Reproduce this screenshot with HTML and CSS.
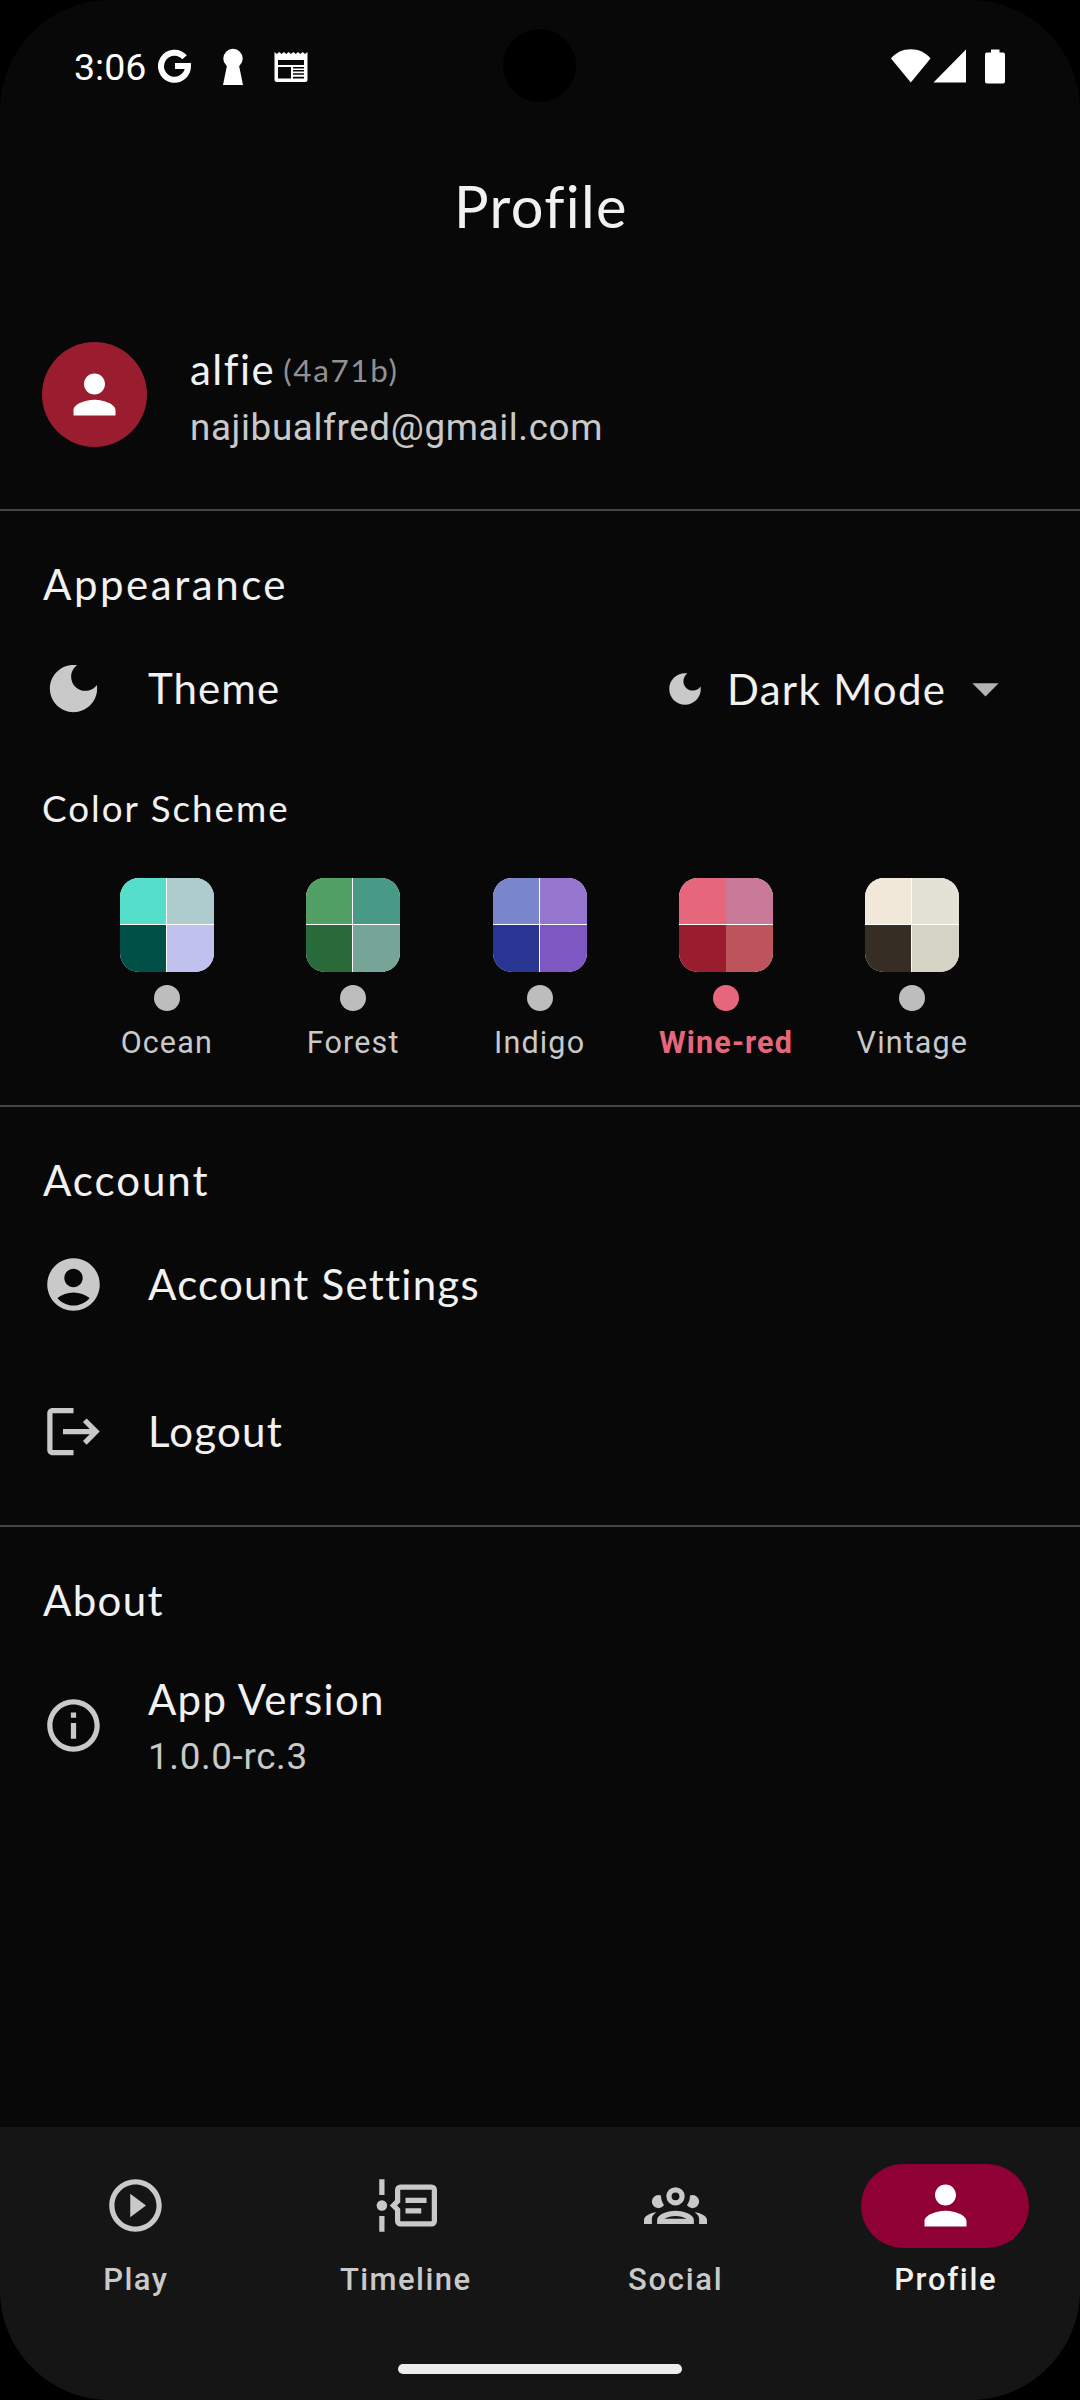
FILE: index.html
```html
<!DOCTYPE html>
<html lang="en">
<head>
<meta charset="utf-8">
<title>Profile</title>
<link rel="stylesheet" href="styles.css">
</head>
<body>
<div class="screen">
  <div class="camera"></div>
  <header class="status">
    <div class="status-left">
      <span class="clock">3:06</span>
      <svg class="ic-google" width="34" height="34" viewBox="0 0 34 34"><path d="M26.6 8.3A13.5 13.5 0 1 0 30 17H17" fill="none" stroke="#fff" stroke-width="6"/></svg>
      <svg class="ic-key" width="22" height="38" viewBox="0 0 22 38" fill="#fff"><circle cx="11" cy="10.5" r="9.7"/><path d="M5.5 15h11l4.5 22H1z"/></svg>
      <svg class="ic-news" width="34" height="32" viewBox="0 0 34 32"><path fill="#fff" fill-rule="evenodd" d="M.5 1l2.3 2 2.4-2 2.3 2 2.4-2 2.3 2 2.4-2L17 3l2.4-2 2.3 2L24 1l2.3 2 2.4-2L31 3l2.5-2v27.500a2.500 2.500 0 0 1-2.500 2.500H3a2.500 2.500 0 0 1-2.500-2.500zM4 9v5h26V9zM4 16v11.500h13V16zM19 16v1.500h11V16zM19 19v1.500h11V19zM19 22.300v1.500h11v-1.500zM19 25.700v1.800h11v-1.800z"/></svg>
    </div>
    <div class="status-right">
      <svg class="ic-wifi" width="40" height="34" viewBox="0 0 40 34" fill="#fff"><path d="M0 9.500C5 3.500 12 .3 19.800.3S34.500 3.500 39.500 9.500L19.800 33.500z"/></svg>
      <svg class="ic-signal" width="34" height="34" viewBox="0 0 34 34" fill="#fff"><path d="M33 .5V33.500H.5z"/></svg>
      <svg class="ic-battery" width="20" height="35" viewBox="0 0 20 35" fill="#fff"><path d="M6 .5h8.500V3.500H18a2 2 0 0 1 2 2V32.500a2 2 0 0 1-2 2H2a2 2 0 0 1-2-2V5.500a2 2 0 0 1 2-2h4z"/></svg>
    </div>
  </header>
  <h1 class="app-title">Profile</h1>

  <main class="content">
    <section class="user">
      <div class="avatar">
        <svg class="icon" viewBox="0 0 24 24"><path d="M12 12c2.210 0 4-1.790 4-4s-1.790-4-4-4-4 1.790-4 4 1.790 4 4 4zm0 2c-2.670 0-8 1.340-8 4v2h16v-2c0-2.660-5.330-4-8-4z"/></svg>
      </div>
      <div class="user-text">
        <div class="user-name"><span>alfie</span><span class="tag">(4a71b)</span></div>
        <div class="sub email">najibualfred@gmail.com</div>
      </div>
    </section>

    <section class="group appearance">
      <h2 class="heading wide">Appearance</h2>
      <div class="row">
        <svg class="icon" viewBox="0 0 24 24"><path d="M12 3c-4.970 0-9 4.030-9 9s4.030 9 9 9 9-4.030 9-9c0-.46-.04-.92-.1-1.360-.98 1.370-2.580 2.260-4.400 2.260-2.980 0-5.400-2.420-5.400-5.400 0-1.810.89-3.420 2.260-4.400-.44-.06-.9-.1-1.360-.1z"/></svg>
        <span class="label theme">Theme</span>
        <div class="select">
          <svg class="icon small" viewBox="0 0 24 24"><path d="M12 3c-4.970 0-9 4.030-9 9s4.030 9 9 9 9-4.030 9-9c0-.46-.04-.92-.1-1.360-.98 1.370-2.580 2.260-4.400 2.260-2.980 0-5.400-2.420-5.400-5.400 0-1.810.89-3.420 2.260-4.400-.44-.06-.9-.1-1.360-.1z"/></svg>
          <span class="select-value">Dark Mode</span>
          <svg class="icon caret" viewBox="0 0 24 24"><path d="M7 10l5 5 5-5z"/></svg>
        </div>
      </div>
      <h3 class="subheading">Color Scheme</h3>
      <div class="schemes">
        <div class="scheme"><div class="swatch ocean"><i></i><i></i><i></i><i></i></div><span class="dot"></span><span class="scheme-name">Ocean</span></div>
        <div class="scheme"><div class="swatch forest"><i></i><i></i><i></i><i></i></div><span class="dot"></span><span class="scheme-name">Forest</span></div>
        <div class="scheme"><div class="swatch indigo"><i></i><i></i><i></i><i></i></div><span class="dot"></span><span class="scheme-name">Indigo</span></div>
        <div class="scheme selected"><div class="swatch wine"><i></i><i></i><i></i><i></i></div><span class="dot"></span><span class="scheme-name">Wine-red</span></div>
        <div class="scheme"><div class="swatch vintage"><i></i><i></i><i></i><i></i></div><span class="dot"></span><span class="scheme-name">Vintage</span></div>
      </div>
    </section>

    <section class="group account">
      <h2 class="heading medium">Account</h2>
      <div class="row">
        <svg class="icon" viewBox="0 0 24 24"><path d="M12 2C6.480 2 2 6.480 2 12s4.480 10 10 10 10-4.480 10-10S17.520 2 12 2zm0 4c1.930 0 3.500 1.570 3.500 3.500S13.930 13 12 13s-3.500-1.570-3.500-3.500S10.070 6 12 6zm0 14c-2.030 0-4.430-.82-6.140-2.880C7.550 15.800 9.680 15 12 15s4.450.8 6.140 2.120C16.430 19.180 14.030 20 12 20z"/></svg>
        <span class="label">Account Settings</span>
      </div>
      <div class="row">
        <svg class="icon" viewBox="0 0 24 24"><path d="M17 7l-1.410 1.410L18.170 11H8v2h10.170l-2.580 2.580L17 17l5-5zM4 5h8V3H4c-1.100 0-2 .9-2 2v14c0 1.100.9 2 2 2h8v-2H4V5z"/></svg>
        <span class="label">Logout</span>
      </div>
    </section>

    <section class="group about">
      <h2 class="heading">About</h2>
      <div class="row tall">
        <svg class="icon" viewBox="0 0 24 24"><path d="M11 7h2v2h-2zm0 4h2v6h-2zm1-9C6.480 2 2 6.480 2 12s4.480 10 10 10 10-4.480 10-10S17.520 2 12 2zm0 18c-4.410 0-8-3.590-8-8s3.590-8 8-8 8 3.590 8 8-3.590 8-8 8z"/></svg>
        <div class="stack"><span class="label">App Version</span><span class="sub">1.0.0-rc.3</span></div>
      </div>
    </section>
  </main>

  <footer class="bottom">
    <nav class="tabs">
      <div class="tab"><div class="pill"><svg class="icon" viewBox="0 0 24 24"><path d="M12 2C6.480 2 2 6.480 2 12s4.480 10 10 10 10-4.480 10-10S17.520 2 12 2zm0 18c-4.410 0-8-3.590-8-8s3.590-8 8-8 8 3.590 8 8-3.590 8-8 8zM10 16.500l6-4.500-6-4.500z"/></svg></div><span>Play</span></div>
      <div class="tab"><div class="pill"><svg class="icon" viewBox="0 0 24 24"><path d="M2 2h2v6H2zM2 16h2v6H2zM12 9h8v2h-8zM12 13h6v2h-6z"/><circle cx="3" cy="12" r="2"/><path fill-rule="evenodd" d="M10 4h12a2 2 0 0 1 2 2v12a2 2 0 0 1-2 2H10a2 2 0 0 1-2-2v-4l-2-2 2-2V6a2 2 0 0 1 2-2zM10 6v4.800L8.800 12l1.200 1.200V18h12V6z"/></svg></div><span>Timeline</span></div>
      <div class="tab social"><div class="pill"><svg class="icon" viewBox="0 0 24 24"><path d="M12,5A3.500,3.500 0 0,0 8.500,8.500A3.500,3.500 0 0,0 12,12A3.500,3.500 0 0,0 15.500,8.500A3.500,3.500 0 0,0 12,5M12,7A1.500,1.500 0 0,1 13.500,8.500A1.500,1.500 0 0,1 12,10A1.500,1.500 0 0,1 10.500,8.500A1.500,1.500 0 0,1 12,7M5.500,8A2.500,2.500 0 0,0 3,10.500C3,11.440 3.530,12.250 4.290,12.680C4.650,12.880 5.060,13 5.500,13C5.940,13 6.350,12.880 6.710,12.680C7.080,12.470 7.390,12.170 7.620,11.810C6.890,10.860 6.500,9.700 6.500,8.500C6.500,8.410 6.500,8.310 6.500,8.220C6.200,8.080 5.860,8 5.500,8M18.500,8C18.140,8 17.800,8.080 17.500,8.220C17.500,8.310 17.500,8.410 17.500,8.500C17.500,9.700 17.110,10.860 16.380,11.810C16.500,12 16.630,12.150 16.780,12.300C16.940,12.450 17.100,12.580 17.290,12.680C17.650,12.880 18.060,13 18.500,13C18.940,13 19.350,12.880 19.710,12.680C20.470,12.250 21,11.440 21,10.500A2.500,2.500 0 0,0 18.500,8M12,14C9.660,14 5,15.170 5,17.500V19H19V17.500C19,15.170 14.340,14 12,14M4.710,14.550C2.780,14.780 0,15.760 0,17.500V19H3V17.070C3,16.060 3.690,15.220 4.710,14.550M19.290,14.550C20.310,15.220 21,16.060 21,17.070V19H24V17.500C24,15.760 21.220,14.780 19.290,14.550M12,16C13.530,16 15.240,16.500 16.230,17H7.770C8.760,16.500 10.470,16 12,16Z"/></svg></div><span>Social</span></div>
      <div class="tab active"><div class="pill"><svg class="icon" viewBox="0 0 24 24"><path d="M12 12c2.210 0 4-1.790 4-4s-1.790-4-4-4-4 1.790-4 4 1.790 4 4 4zm0 2c-2.670 0-8 1.340-8 4v2h16v-2c0-2.660-5.330-4-8-4z"/></svg></div><span>Profile</span></div>
    </nav>
    <div class="home-bar"></div>
  </footer>
</div>
</body>
</html>
```
FILE: styles.css
```css
* { box-sizing: border-box; }
body { margin: 0; background: #000; }
h1, h2, h3 { margin: 0; font-weight: 400; }

.screen {
  position: relative;
  display: flex;
  flex-direction: column;
  width: 1080px;
  height: 2400px;
  overflow: hidden;
  border-radius: 110px;
  background: #080808;
  color: #f1f1f1;
  font-family: Lato, sans-serif;
  white-space: nowrap;
}

/* status bar */
.camera {
  position: absolute;
  top: 29px;
  left: 503px;
  width: 73px;
  height: 73px;
  border-radius: 50%;
  background: #000;
}
.status {
  display: flex;
  justify-content: space-between;
  align-items: center;
  height: 132px;
  padding: 0 75px 0 74px;
}
.status-left, .status-right { display: flex; align-items: center; }
.status svg { display: block; }
.clock {
  width: 84px;
  padding-top: 2px;
  color: #fff;
  font: 37.5px/40px Roboto, sans-serif;
}
.ic-key { margin: 2px 30px 0; }
.ic-news { margin-top: 2px; }
.ic-signal { margin: 0 18px 0 2px; }

.app-title {
  height: 146px;
  padding: 1px 0 0 2px;
  font-size: 57.75px;
  line-height: 146px;
  letter-spacing: 1.37px;
  text-align: center;
}

/* page body */
.content { flex: 1; }
.icon { display: block; flex: none; width: 63px; height: 63px; fill: #c9c9c9; }

.user {
  display: flex;
  align-items: flex-start;
  gap: 43px;
  height: 231px;
  padding: 60px 42px 0;
}
.avatar {
  display: grid;
  place-items: center;
  width: 105px;
  height: 105px;
  margin-top: 4px;
  border-radius: 50%;
  background: #9a1c2f;
}
.avatar .icon { fill: #fff; }
.user-name {
  display: flex;
  align-items: center;
  gap: 8px;
  height: 60px;
  padding-top: 2px;
  font-size: 42px;
  letter-spacing: 1.5px;
}
.tag {
  padding-top: 2px;
  color: #919191;
  font-size: 31.5px;
  letter-spacing: 1.6px;
}
.sub {
  color: #c9c9c9;
  font: 36.75px/58px Roboto, sans-serif;
  letter-spacing: .65px;
}
.email { line-height: 60px; }

.group { border-top: 2px solid #444; }
.heading {
  height: 104px;
  padding: 48px 42px 0 43px;
  font-size: 42px;
  line-height: 50px;
  letter-spacing: 1.35px;
}
.heading.wide { letter-spacing: 2.55px; }
.heading.medium { letter-spacing: 1.98px; }
.row {
  display: flex;
  align-items: center;
  gap: 43px;
  height: 147px;
  padding: 0 42px;
}
.row.tall { height: 189px; }
.label { padding-bottom: 2px; font-size: 42px; line-height: 58px; letter-spacing: 1.26px; }
.label.theme { letter-spacing: 1.1px; }
.stack { display: flex; flex-direction: column; padding-top: 4px; }
.stack .label { padding: 0; }

.select { display: flex; align-items: center; margin: 0 21px 0 auto; }
.icon.small { width: 42px; height: 42px; margin-right: 21px; }
.icon.caret { fill: #b3b3b3; }
.select-value { width: 227px; font-size: 42px; letter-spacing: 1.3px; }

.appearance { height: 596px; }
.account { height: 420px; }
.subheading {
  height: 116px;
  padding: 21px 42px 0;
  font-size: 36.75px;
  line-height: 50px;
  letter-spacing: 2.02px;
}

/* colour scheme picker */
.schemes {
  display: grid;
  grid-template-columns: repeat(5, 1fr);
  padding: 0 74.4px 0 73.6px;
}
.scheme { display: flex; flex-direction: column; align-items: center; }
.swatch {
  display: grid;
  grid-template-columns: 46px 47px;
  grid-template-rows: 46px 47px;
  gap: 1px;
  width: 94px;
  height: 94px;
  overflow: hidden;
  border-radius: 19px;
  background: #fff;
}
.ocean i:nth-child(1) { background: #55dfcb; }
.ocean i:nth-child(2) { background: #aecbce; }
.ocean i:nth-child(3) { background: #005047; }
.ocean i:nth-child(4) { background: #c0c1ef; }
.forest i:nth-child(1) { background: #52a066; }
.forest i:nth-child(2) { background: #489986; }
.forest i:nth-child(3) { background: #286a39; }
.forest i:nth-child(4) { background: #76a497; }
.indigo i:nth-child(1) { background: #7986cb; }
.indigo i:nth-child(2) { background: #9575cd; }
.indigo i:nth-child(3) { background: #283593; }
.indigo i:nth-child(4) { background: #7e57c2; }
.wine { grid-template-columns: 47px 47px; column-gap: 0; }
.wine i:nth-child(1) { background: #e6677c; }
.wine i:nth-child(2) { background: #c97998; }
.wine i:nth-child(3) { background: #9a1c2f; }
.wine i:nth-child(4) { background: #be545b; }
.vintage i:nth-child(1) { background: #f1e8d9; }
.vintage i:nth-child(2) { background: #e4e1d6; }
.vintage i:nth-child(3) { background: #362e24; }
.vintage i:nth-child(4) { background: #d5d3c4; }
.dot {
  width: 26px;
  height: 26px;
  margin: 13px 0 12px;
  border-radius: 50%;
  background: #bdbdbd;
}
.scheme-name {
  padding-top: 1px;
  color: #c9c9c9;
  font: 30.5px/38px Roboto, sans-serif;
  letter-spacing: 1.15px;
}
.selected .dot { background: #e6677c; }
.selected .scheme-name { color: #e6677c; font-weight: 700; }

/* bottom navigation */
.bottom { height: 273px; padding-top: 37px; background: #151515; }
.tabs { display: grid; grid-template-columns: repeat(4, 1fr); }
.tab {
  display: flex;
  flex-direction: column;
  align-items: center;
  gap: 13px;
  color: #c9c9c9;
  font: 500 31px/38px Roboto, sans-serif;
  letter-spacing: 1.45px;
}
.tab span { padding-left: 1.5px; }
.tab.social, .tab.active { letter-spacing: 1.7px; }
.pill {
  display: grid;
  place-items: start center;
  width: 168px;
  height: 84px;
  padding-top: 10px;
  border-radius: 42px;
}
.active { color: #f1f1f1; }
.active .pill { background: #8f0035; }
.active .icon { fill: #fff; }
.home-bar {
  width: 284px;
  height: 10px;
  margin: 65px auto 0;
  border-radius: 5px;
  background: #ededed;
}
```
